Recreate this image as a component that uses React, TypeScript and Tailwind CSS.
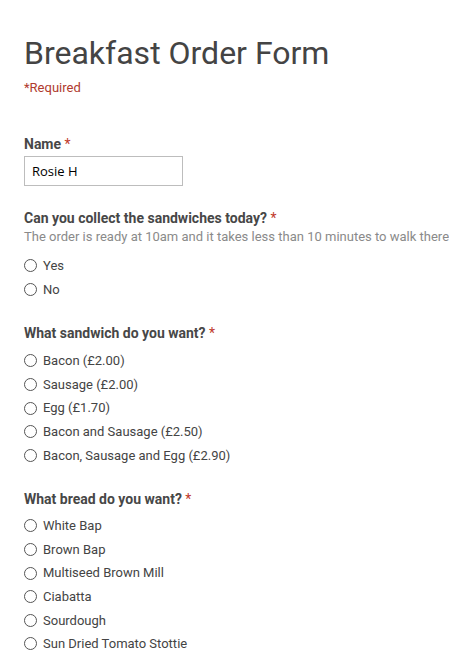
const sandwiches = [
  "Bacon (£2.00)",
  "Sausage (£2.00)",
  "Egg (£1.70)",
  "Bacon and Sausage (£2.50)",
  "Bacon, Sausage and Egg (£2.90)",
]

const breads = [
  "White Bap",
  "Brown Bap",
  "Multiseed Brown Mill",
  "Ciabatta",
  "Sourdough",
  "Sun Dried Tomato Stottie",
]

function Label({ children }: { children: React.ReactNode }) {
  return (
    <div className="text-[14px] font-bold leading-[18px] text-[#474747]">
      {children} <span className="font-normal text-[#c0392b]">*</span>
    </div>
  )
}

function Options({ items, name }: { items: string[]; name: string }) {
  return (
    <div className="flex flex-col">
      {items.map((item) => (
        <label key={item} className="flex h-[23.6px] items-center gap-[6px] text-[13px] text-[#444]">
          <span className="h-[13px] w-[13px] rounded-full border border-[#555] bg-white" />
          <input type="radio" name={name} className="hidden" />
          {item}
        </label>
      ))}
    </div>
  )
}

export default function App() {
  return (
    <div className="min-h-[655px] overflow-hidden bg-white px-[24px] pt-[34px] font-['Roboto',sans-serif]">
      <h1 className="text-[32px] leading-[38px] text-[#444]">Breakfast Order Form</h1>
      <div className="mt-[8px] text-[13px] leading-[16px] text-[#b03a2e]">*Required</div>

      <div className="mt-[39px]">
        <Label>Name</Label>
        <input
          defaultValue="Rosie H"
          className="mt-[3px] h-[30px] w-[159px] border border-[#bdbdbd] px-[7px] font-['Open_Sans',sans-serif] text-[13px] text-black outline-none"
        />
      </div>

      <div className="mt-[23px]">
        <Label>Can you collect the sandwiches today?</Label>
        <div className="mt-[1px] whitespace-nowrap text-[13px] leading-[18px] text-[#8a8a8a]">
          The order is ready at 10am and it takes less than 10 minutes to walk there
        </div>
        <div className="mt-[8px]">
          <Options items={["Yes", "No"]} name="collect" />
        </div>
      </div>

      <div className="mt-[23px]">
        <Label>What sandwich do you want?</Label>
        <div className="mt-[7px]">
          <Options items={sandwiches} name="sandwich" />
        </div>
      </div>

      <div className="mt-[23px]">
        <Label>What bread do you want?</Label>
        <div className="mt-[6px]">
          <Options items={breads} name="bread" />
        </div>
      </div>
    </div>
  )
}
